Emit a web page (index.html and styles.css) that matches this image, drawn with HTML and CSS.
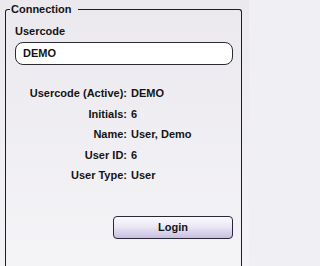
FILE: index.html
```html
<!DOCTYPE html>
<html lang="en">
<head>
<meta charset="utf-8">
<title>Connection</title>
<link rel="stylesheet" href="styles.css">
</head>
<body>
<fieldset class="panel">
  <legend class="panel-title">Connection</legend>
  <div class="panel-body">
    <label class="field-label" for="usercode">Usercode</label>
    <div class="input-box" id="usercode">DEMO</div>
    <div class="info-grid">
      <div class="info-key">Usercode (Active):</div><div class="info-val">DEMO</div>
      <div class="info-key">Initials:</div><div class="info-val">6</div>
      <div class="info-key">Name:</div><div class="info-val">User, Demo</div>
      <div class="info-key">User ID:</div><div class="info-val">6</div>
      <div class="info-key">User Type:</div><div class="info-val">User</div>
    </div>
    <div class="actions">
      <button class="btn" type="button">Login</button>
    </div>
  </div>
</fieldset>
</body>
</html>
```
FILE: styles.css
```css
html {
  background: #f0eff3;
}
body {
  margin: 0;
  width: 249px;
  height: 266px;
  box-sizing: border-box;
  padding: 3px 7px 0 5px;
  display: flex;
  flex-direction: column;
  overflow: hidden;
  background: linear-gradient(#ebe9ee, #f4f3f6);
  font-family: "Liberation Sans", Arial, sans-serif;
  font-size: 11px;
  font-weight: bold;
  color: #141414;
}
.panel {
  flex: 1;
  margin: 0;
  padding: 0;
  border: 1px solid #1d1c28;
  border-bottom: none;
  border-radius: 3px 3px 0 0;
  min-width: 0;
}
.panel-title {
  margin-left: 4px;
  padding: 0 6px 0 1px;
  line-height: 13px;
  font-size: 11px;
}
.panel-body {
  display: flex;
  flex-direction: column;
  padding: 8px 8px 0 9px;
}
.field-label {
  line-height: 14px;
}
.input-box {
  margin-top: 4px;
  height: 21px;
  line-height: 21px;
  padding-left: 7px;
  background: #ffffff;
  border: 1px solid #2a2a33;
  border-radius: 8px;
}
.info-grid {
  margin-top: 18px;
  display: grid;
  grid-template-columns: 112px 1fr;
  column-gap: 4px;
  grid-auto-rows: 20.5px;
  align-items: center;
}
.info-key {
  text-align: right;
}
.actions {
  margin-top: 30px;
  display: flex;
  justify-content: flex-end;
}
.btn {
  width: 120px;
  height: 23px;
  padding: 0;
  font: inherit;
  color: inherit;
  background: linear-gradient(#faf9fd, #ebe8f5 45%, #c6bfe0);
  border: 1px solid #2a2838;
  border-radius: 4px;
}
```
